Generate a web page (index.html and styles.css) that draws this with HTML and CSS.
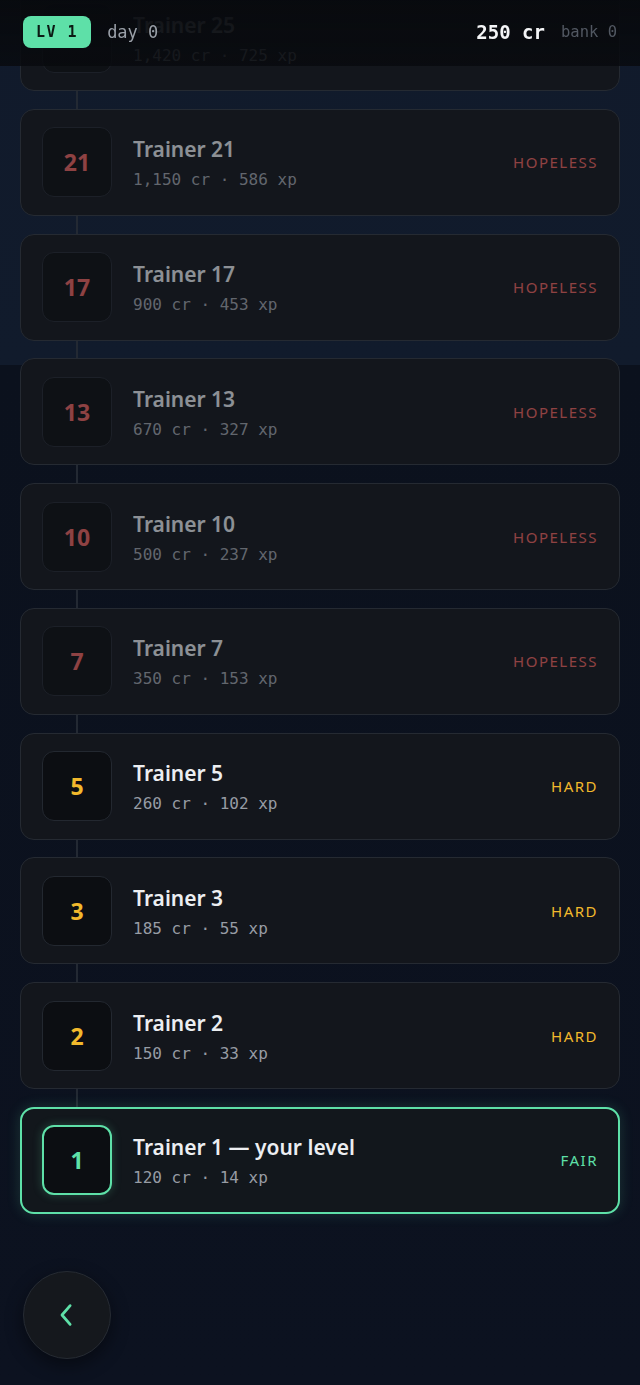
FILE: index.html
```html
<!DOCTYPE html>
<html lang="en">
<head>
    <meta charset="UTF-8">
    <meta name="viewport" content="width=device-width, initial-scale=1.0">
    <title>Trainers</title>
    <link rel="stylesheet" href="styles.css">
</head>
<body>
    <header class="topbar">
        <span class="lv-badge">LV 1</span>
        <span class="day">day 0</span>
        <span class="spacer"></span>
        <span class="credits">250 cr</span>
        <span class="bank">bank 0</span>
    </header>

    <main class="ladder">
        <div class="card hopeless under-bar">
            <div class="rank">25</div>
            <div class="info">
                <div class="name">Trainer 25</div>
                <div class="stats">1,420 cr · 725 xp</div>
            </div>
        </div>
        <div class="card hopeless">
            <div class="rank">21</div>
            <div class="info">
                <div class="name">Trainer 21</div>
                <div class="stats">1,150 cr · 586 xp</div>
            </div>
            <div class="odds">HOPELESS</div>
        </div>
        <div class="card hopeless">
            <div class="rank">17</div>
            <div class="info">
                <div class="name">Trainer 17</div>
                <div class="stats">900 cr · 453 xp</div>
            </div>
            <div class="odds">HOPELESS</div>
        </div>
        <div class="card hopeless">
            <div class="rank">13</div>
            <div class="info">
                <div class="name">Trainer 13</div>
                <div class="stats">670 cr · 327 xp</div>
            </div>
            <div class="odds">HOPELESS</div>
        </div>
        <div class="card hopeless">
            <div class="rank">10</div>
            <div class="info">
                <div class="name">Trainer 10</div>
                <div class="stats">500 cr · 237 xp</div>
            </div>
            <div class="odds">HOPELESS</div>
        </div>
        <div class="card hopeless">
            <div class="rank">7</div>
            <div class="info">
                <div class="name">Trainer 7</div>
                <div class="stats">350 cr · 153 xp</div>
            </div>
            <div class="odds">HOPELESS</div>
        </div>
        <div class="card hard">
            <div class="rank">5</div>
            <div class="info">
                <div class="name">Trainer 5</div>
                <div class="stats">260 cr · 102 xp</div>
            </div>
            <div class="odds">HARD</div>
        </div>
        <div class="card hard">
            <div class="rank">3</div>
            <div class="info">
                <div class="name">Trainer 3</div>
                <div class="stats">185 cr · 55 xp</div>
            </div>
            <div class="odds">HARD</div>
        </div>
        <div class="card hard">
            <div class="rank">2</div>
            <div class="info">
                <div class="name">Trainer 2</div>
                <div class="stats">150 cr · 33 xp</div>
            </div>
            <div class="odds">HARD</div>
        </div>
        <div class="card fair current">
            <div class="rank">1</div>
            <div class="info">
                <div class="name">Trainer 1 — your level</div>
                <div class="stats">120 cr · 14 xp</div>
            </div>
            <div class="odds">FAIR</div>
        </div>
    </main>

    <button class="back-btn" aria-label="Back">
        <svg width="30" height="30" viewBox="0 0 24 24" fill="none" stroke="#5ee0a8" stroke-width="2.2" stroke-linecap="round" stroke-linejoin="round">
            <path d="M14.5 4.5 L8 12 L14.5 19.5"/>
        </svg>
    </button>
</body>
</html>
```

FILE: styles.css
```css
body {
    margin: 0;
    min-height: 100vh;
    background: linear-gradient(to bottom, #111a2b 0, #111b2c 365px, #0b111d 365px, #0c1220 100%);
    font-family: "Noto Sans", "Open Sans", sans-serif;
    color: #e8eaed;
    overflow: hidden;
}

/* top status bar, sits over the scrolled list */
.topbar {
    position: fixed;
    top: 0;
    left: 0;
    right: 0;
    height: 66px;
    display: flex;
    align-items: center;
    gap: 16px;
    padding: 0 23px 2px;
    box-sizing: border-box;
    background: linear-gradient(to bottom, rgba(8, 10, 14, 0.96), rgba(8, 10, 14, 0.82));
    z-index: 5;
}

.lv-badge {
    background-color: #5ee0a8;
    color: #0b1a14;
    font-family: "DejaVu Sans Mono", monospace;
    font-weight: bold;
    font-size: 15px;
    letter-spacing: 1.5px;
    padding: 7px 13px;
    border-radius: 8px;
}

.day {
    font-family: "DejaVu Sans Mono", monospace;
    font-size: 17px;
    color: #9aa0a8;
}

.spacer {
    flex: 1;
}

.credits {
    font-family: "DejaVu Sans Mono", monospace;
    font-size: 19px;
    font-weight: 600;
    color: #f4f5f7;
}

.bank {
    font-family: "DejaVu Sans Mono", monospace;
    font-size: 15.5px;
    color: #525862;
}

.ladder {
    position: relative;
    display: flex;
    flex-direction: column;
    gap: 17.75px;
    margin: -16px 20px 0;
}

/* the thin line joining the cards */
.ladder::before {
    content: "";
    position: absolute;
    left: 56px;
    top: 0;
    bottom: 0;
    width: 2px;
    background-color: #232933;
}

.card {
    position: relative;
    height: 107px;
    box-sizing: border-box;
    display: flex;
    align-items: center;
    padding: 0 21px;
    background-color: #13161c;
    border: 1px solid #252a32;
    border-radius: 14px;
}

.under-bar .info {
    opacity: 0.35;
}

.rank {
    width: 70px;
    height: 70px;
    box-sizing: border-box;
    display: flex;
    align-items: center;
    justify-content: center;
    background-color: #0c0e12;
    border: 1px solid #232830;
    border-radius: 12px;
    font-size: 23px;
    font-weight: bold;
    margin-right: 21px;
}

.info {
    flex: 1;
}

.name {
    font-size: 21px;
    font-weight: 600;
    line-height: 28px;
    color: #eceef1;
}

.stats {
    font-family: "DejaVu Sans Mono", monospace;
    font-size: 16px;
    color: #979ca4;
    margin-top: 7px;
}

.odds {
    font-size: 15px;
    letter-spacing: 1.5px;
}

.hopeless .rank,
.hopeless .info,
.hopeless .odds {
    opacity: 0.6;
}

.hopeless .rank,
.hopeless .odds {
    color: #e0605e;
}

.hopeless .name {
    color: #dfe2e6;
}

.hard .rank,
.hard .odds {
    color: #f2b92c;
}

.fair .rank,
.fair .odds {
    color: #5ee0a8;
}

.current {
    border: 2px solid #5ee0a8;
    padding: 0 20px;
    background-color: #12171c;
    box-shadow: 0 0 14px rgba(94, 224, 168, 0.18);
}

.current .rank {
    border: 2px solid #5ee0a8;
    box-shadow: 0 0 10px rgba(94, 224, 168, 0.25);
}

.back-btn {
    display: flex;
    align-items: center;
    justify-content: center;
    width: 88px;
    height: 88px;
    margin: 57px 0 0 23px;
    padding: 0;
    border-radius: 50%;
    background-color: #15181d;
    border: 1px solid #262b33;
    box-shadow: 0 6px 18px rgba(0, 0, 0, 0.45);
    cursor: pointer;
}
```
